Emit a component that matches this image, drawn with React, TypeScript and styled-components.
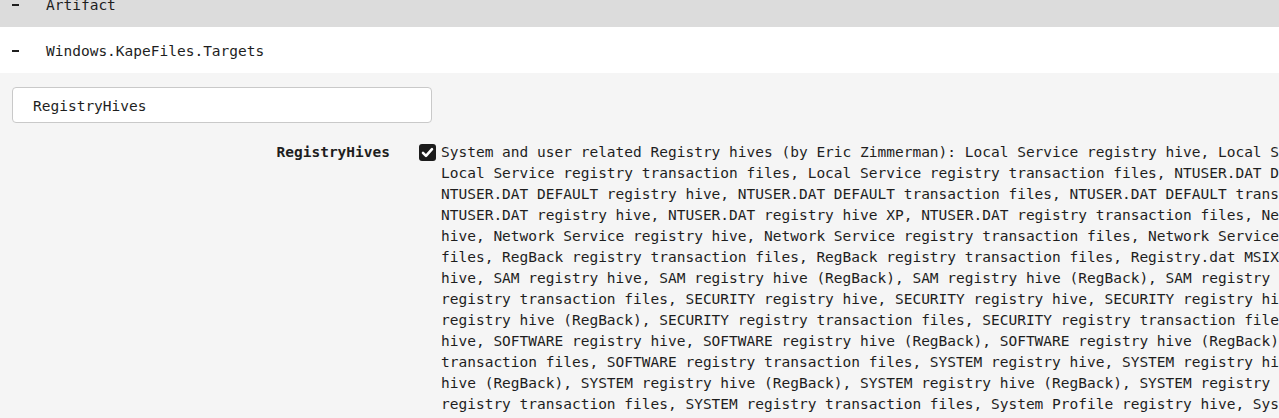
import React, { useLayoutEffect, useRef } from "react";
import styled, { createGlobalStyle } from "styled-components";

const GlobalStyle = createGlobalStyle`
  html, body {
    margin: 0;
    padding: 0;
    overflow: hidden;
  }
  body {
    font-family: "DejaVu Sans Mono", "Liberation Mono", monospace;
    font-size: 14.5px;
    color: #1e1e1e;
    background: #f5f5f5;
  }
`;

const hives: string[] = [
  "Local Service registry hive",
  "Local Service registry hive",
  "Local Service registry transaction files",
  "Local Service registry transaction files",
  "NTUSER.DAT DEFAULT registry hive",
  "NTUSER.DAT DEFAULT registry hive",
  "NTUSER.DAT DEFAULT transaction files",
  "NTUSER.DAT DEFAULT transaction files",
  "NTUSER.DAT registry hive",
  "NTUSER.DAT registry hive XP",
  "NTUSER.DAT registry transaction files",
  "Network Service registry hive",
  "Network Service registry hive",
  "Network Service registry transaction files",
  "Network Service registry transaction files",
  "RegBack registry transaction files",
  "RegBack registry transaction files",
  "Registry.dat MSIX (per-user) registry hive",
  "SAM registry hive",
  "SAM registry hive (RegBack)",
  "SAM registry hive (RegBack)",
  "SAM registry transaction files",
  "SAM registry transaction files",
  "SECURITY registry hive",
  "SECURITY registry hive",
  "SECURITY registry hive (RegBack)",
  "SECURITY registry hive (RegBack)",
  "SECURITY registry transaction files",
  "SECURITY registry transaction files",
  "SOFTWARE registry hive",
  "SOFTWARE registry hive",
  "SOFTWARE registry hive (RegBack)",
  "SOFTWARE registry hive (RegBack)",
  "SOFTWARE registry transaction files",
  "SOFTWARE registry transaction files",
  "SYSTEM registry hive",
  "SYSTEM registry hive",
  "SYSTEM registry hive (RegBack)",
  "SYSTEM registry hive (RegBack)",
  "SYSTEM registry hive (RegBack)",
  "SYSTEM registry hive (RegBack)",
  "SYSTEM registry transaction files",
  "SYSTEM registry transaction files",
  "System Profile registry hive",
  "System Profile registry hive",
  "System Profile registry transaction files",
  "System Profile registry transaction files",
  "UsrClass.dat registry hive",
  "UsrClass.dat registry hive",
  "UsrClass.dat registry transaction files",
  "UsrClass.dat registry transaction files",
];

const description =
  "System and user related Registry hives (by Eric Zimmerman): " +
  hives.join(", ");

const App: React.FC = () => {
  const paneRef = useRef<HTMLDivElement>(null);

  // the view is scrolled a little, the Artifact header is half out of sight
  useLayoutEffect(() => {
    if (paneRef.current) paneRef.current.scrollTop = 19;
  }, []);

  return (
    <>
      <GlobalStyle />
      <Pane ref={paneRef}>
        <GroupRow tone="head">
          <Toggle>
            <MinusIcon />
          </Toggle>
          <span>Artifact</span>
        </GroupRow>
        <GroupRow tone="item">
          <Toggle>
            <MinusIcon />
          </Toggle>
          <span>Windows.KapeFiles.Targets</span>
        </GroupRow>
        <Params>
          <Filter value="RegistryHives" readOnly />
          <ParamRow>
            <ParamLabel>RegistryHives</ParamLabel>
            <CheckBox role="checkbox" aria-checked="true">
              <svg width="17" height="17" viewBox="0 0 17 17">
                <path
                  d="M4 8.8 7 11.8 13 5.2"
                  fill="none"
                  stroke="#ffffff"
                  strokeWidth="2.6"
                  strokeLinecap="round"
                  strokeLinejoin="round"
                />
              </svg>
            </CheckBox>
            <Description>{description}</Description>
          </ParamRow>
        </Params>
      </Pane>
    </>
  );
};

const MinusIcon: React.FC = () => (
  <svg width="8" height="4" viewBox="0 0 8 4">
    <rect x="0" y="1" width="7" height="2" fill="#1e1e1e" />
  </svg>
);

const Pane = styled.div`
  height: 100vh;
  overflow: hidden;
  background: #f5f5f5;
`;

const GroupRow = styled.div<{ tone: "head" | "item" }>`
  box-sizing: border-box;
  display: flex;
  flex-direction: row;
  align-items: center;
  height: 46px;
  padding: 2px 0 0 12px;
  background: ${(p) => (p.tone === "head" ? "#dcdcdc" : "#ffffff")};
`;

const Toggle = styled.span`
  display: flex;
  align-items: center;
  width: 34px;
`;

const Params = styled.div`
  display: flex;
  flex-direction: column;
  padding: 14px 12px 0;
`;

const Filter = styled.input`
  box-sizing: border-box;
  width: 420px;
  height: 36px;
  padding: 1px 20px 0;
  border: 1px solid #c9c9c9;
  border-radius: 4px;
  background: #ffffff;
  font-family: inherit;
  font-size: 14.5px;
  color: #1e1e1e;
  outline: none;
`;

const ParamRow = styled.div`
  display: flex;
  flex-direction: row;
  align-items: flex-start;
  margin-top: 19px;
  line-height: 21px;
`;

const ParamLabel = styled.div`
  flex: none;
  width: 378px;
  text-align: right;
  font-weight: bold;
`;

const CheckBox = styled.span`
  flex: none;
  display: flex;
  width: 17px;
  height: 17px;
  margin: 2px 5px 0 29px;
  border-radius: 3px;
  background: #1c1c1c;
`;

const Description = styled.div`
  flex: none;
  width: 118.5ch;
`;

export default App;
